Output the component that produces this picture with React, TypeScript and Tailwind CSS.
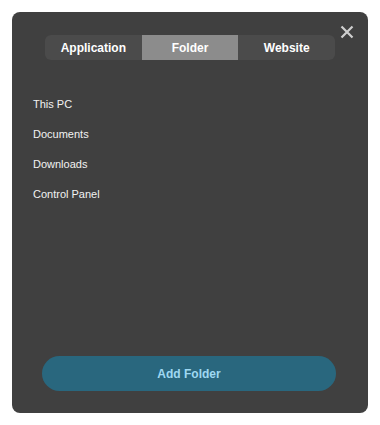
import { useState } from "react";

const tabs = ["Application", "Folder", "Website"];
const places = ["This PC", "Documents", "Downloads", "Control Panel"];

const App = () => {
  const [active, setActive] = useState(1);

  return (
    <div className="w-[380px] h-[425px] bg-white p-[12px] font-['Liberation_Sans',Arial,sans-serif]">
      <div className="relative flex flex-col w-[356px] h-[401px] bg-[#404040] rounded-lg pl-[30px] pr-[32px] pt-[23px] pb-[22px]">
        <button className="absolute right-[14px] top-[13px] text-[#cfcfcf]">
          <svg width="14" height="14" viewBox="0 0 14 14">
            <path d="M1.5 1.5 L12.5 12.5 M12.5 1.5 L1.5 12.5" stroke="currentColor" strokeWidth="2.2" />
          </svg>
        </button>

        <div className="flex ml-[3px] mr-[1px] h-[25px] bg-[#4b4b4b] rounded-md overflow-hidden">
          {tabs.map((t, i) => (
            <div
              key={t}
              onClick={() => setActive(i)}
              className={
                "flex-1 flex items-center justify-center text-[12px] font-bold text-white cursor-pointer " +
                (i === active ? "bg-[#8c8c8c]" : "")
              }
            >
              {t}
            </div>
          ))}
        </div>

        <div className="flex flex-col mt-[29px] -ml-[9px]">
          {places.map((p) => (
            <div key={p} className="h-[30px] flex items-center text-[11px] text-[#f2f2f2]">
              {p}
            </div>
          ))}
        </div>

        <div className="flex-1" />

        <button className="h-[35px] w-full rounded-full bg-[#29677e] text-[12px] font-bold text-[#9fd8f2]">
          Add Folder
        </button>
      </div>
    </div>
  );
};

export default App;
